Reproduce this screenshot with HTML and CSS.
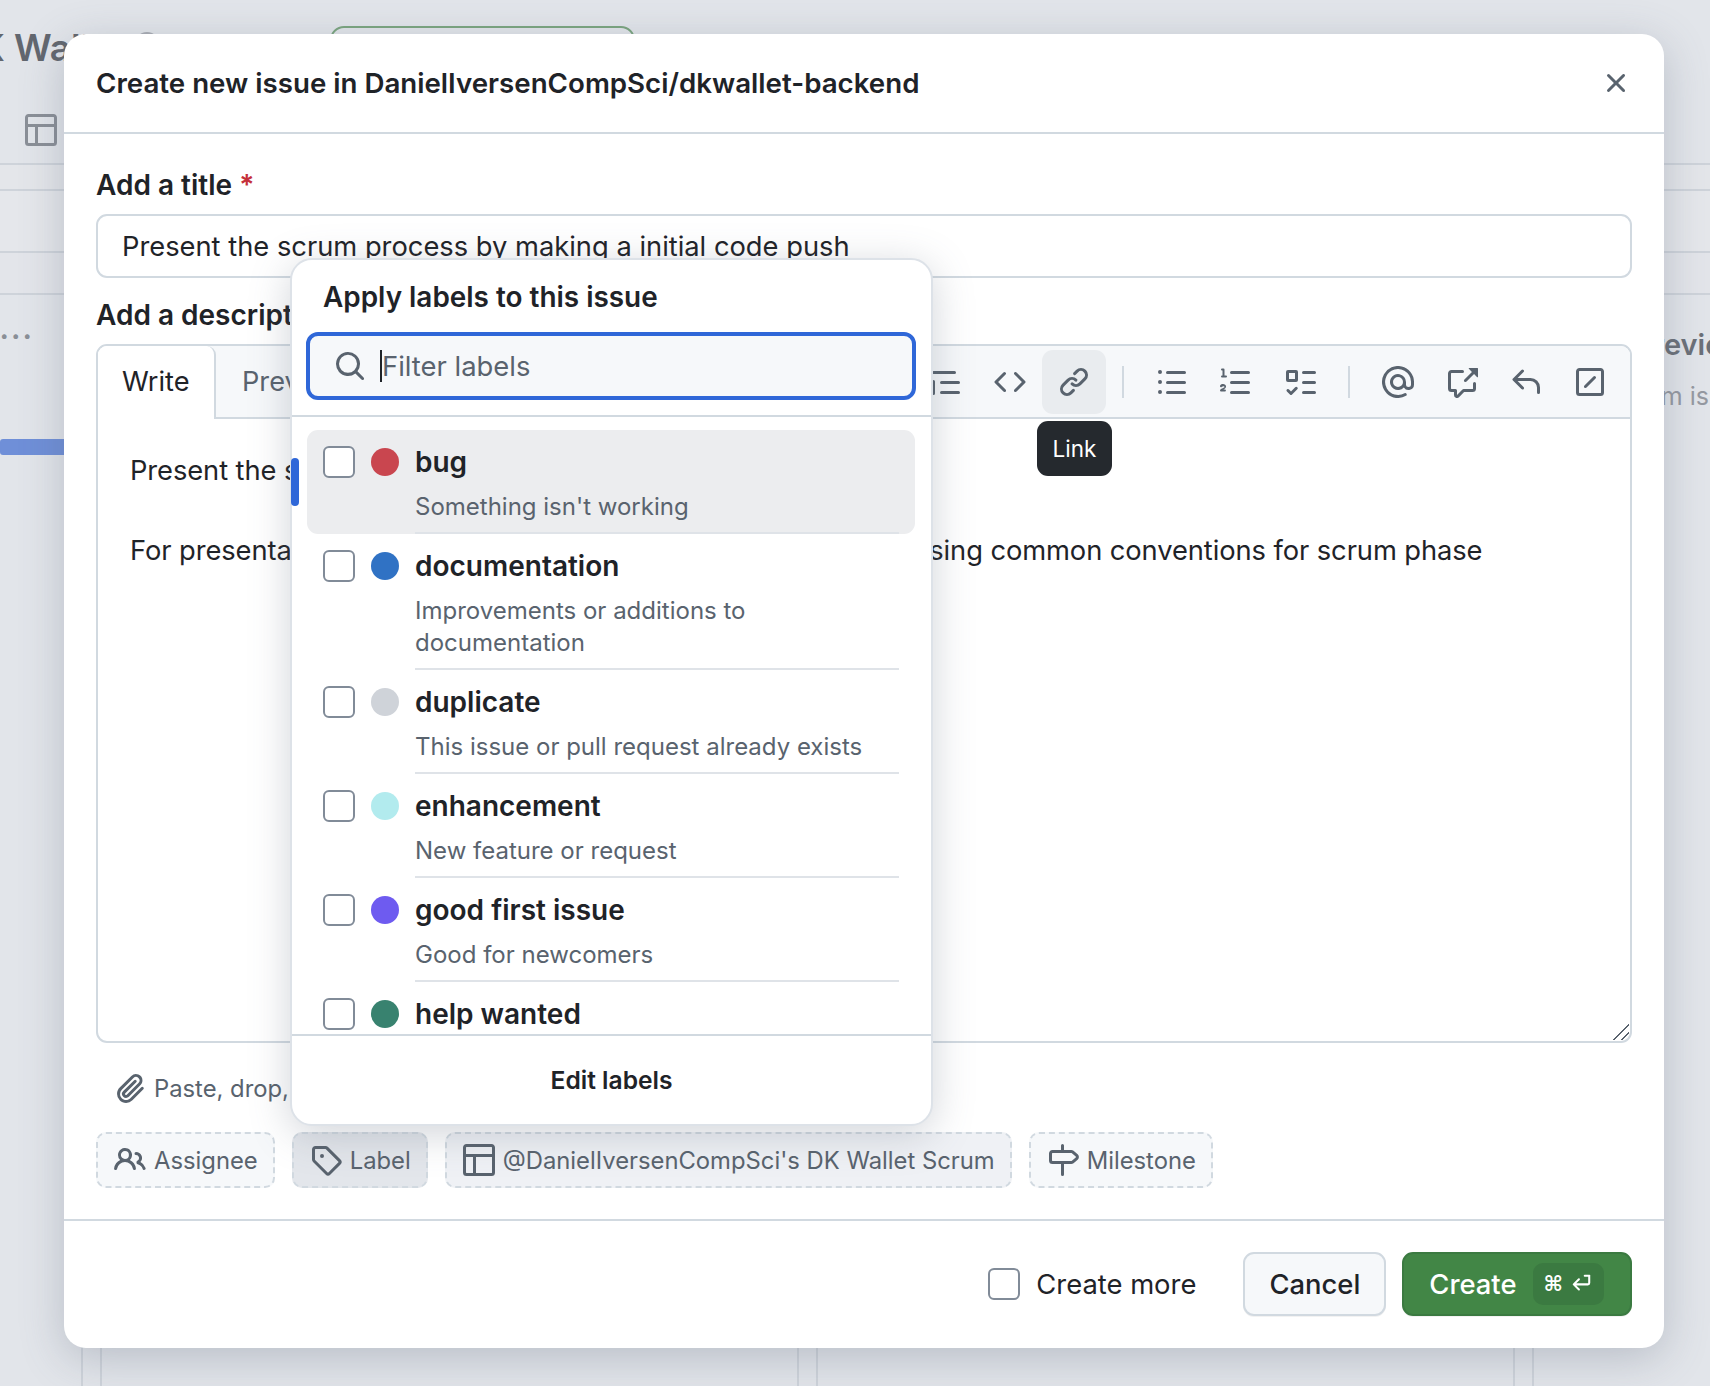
FILE: index.html
```html
<!DOCTYPE html>
<html lang="en">
<head>
  <meta charset="UTF-8" />
  <title>Create new issue</title>
  <link rel="stylesheet" href="styles.css">
</head>
<body>
  <svg class="sprite" xmlns="http://www.w3.org/2000/svg">
    <symbol id="i-x" viewBox="0 0 16 16"><path d="M3.72 3.72a.75.75 0 0 1 1.06 0L8 6.94l3.22-3.22a.749.749 0 0 1 1.275.326.749.749 0 0 1-.215.734L9.06 8l3.22 3.22a.749.749 0 0 1-.326 1.275.749.749 0 0 1-.734-.215L8 9.06l-3.22 3.22a.751.751 0 0 1-1.042-.018.751.751 0 0 1-.018-1.042L6.94 8 3.72 4.78a.75.75 0 0 1 0-1.06Z"/></symbol>
    <symbol id="i-search" viewBox="0 0 16 16"><path d="M10.68 11.74a6 6 0 0 1-7.922-8.982 6 6 0 0 1 8.982 7.922l3.04 3.04a.749.749 0 0 1-.326 1.275.749.749 0 0 1-.734-.215ZM11.5 7a4.499 4.499 0 1 0-8.997 0A4.499 4.499 0 0 0 11.5 7Z"/></symbol>
    <symbol id="i-quote" viewBox="0 0 16 16"><path d="M1.75 2.5h10.5a.75.75 0 0 1 0 1.5H1.75a.75.75 0 0 1 0-1.5Zm4 5h8.5a.75.75 0 0 1 0 1.5h-8.5a.75.75 0 0 1 0-1.5Zm0 5h8.5a.75.75 0 0 1 0 1.5h-8.5a.75.75 0 0 1 0-1.5ZM2.5 7.75v6a.75.75 0 0 1-1.5 0v-6a.75.75 0 0 1 1.5 0Z"/></symbol>
    <symbol id="i-code" viewBox="0 0 16 16"><path d="m11.28 3.22 4.25 4.25a.75.75 0 0 1 0 1.06l-4.25 4.25a.749.749 0 0 1-1.275-.326.749.749 0 0 1 .215-.734L13.94 8l-3.72-3.72a.749.749 0 0 1 .326-1.275.749.749 0 0 1 .734.215Zm-6.56 0a.751.751 0 0 1 1.042.018.751.751 0 0 1 .018 1.042L2.06 8l3.72 3.72a.749.749 0 0 1-.326 1.275.749.749 0 0 1-.734-.215L.47 8.53a.75.75 0 0 1 0-1.06Z"/></symbol>
    <symbol id="i-link" viewBox="0 0 16 16"><path d="m7.775 3.275 1.25-1.25a3.5 3.5 0 1 1 4.95 4.95l-2.5 2.5a3.5 3.5 0 0 1-4.95 0 .751.751 0 0 1 .018-1.042.751.751 0 0 1 1.042-.018 1.998 1.998 0 0 0 2.83 0l2.5-2.5a2.002 2.002 0 0 0-2.83-2.83l-1.25 1.25a.751.751 0 0 1-1.042-.018.751.751 0 0 1-.018-1.042Zm-4.69 9.64a1.998 1.998 0 0 0 2.83 0l1.25-1.25a.751.751 0 0 1 1.042.018.751.751 0 0 1 .018 1.042l-1.25 1.25a3.5 3.5 0 1 1-4.95-4.95l2.5-2.5a3.5 3.5 0 0 1 4.95 0 .751.751 0 0 1-.018 1.042.751.751 0 0 1-1.042.018 1.998 1.998 0 0 0-2.83 0l-2.5 2.5a1.998 1.998 0 0 0 0 2.83Z"/></symbol>
    <symbol id="i-ul" viewBox="0 0 16 16"><path d="M5.75 2.5h8.5a.75.75 0 0 1 0 1.5h-8.5a.75.75 0 0 1 0-1.5Zm0 5h8.5a.75.75 0 0 1 0 1.5h-8.5a.75.75 0 0 1 0-1.5Zm0 5h8.5a.75.75 0 0 1 0 1.5h-8.5a.75.75 0 0 1 0-1.5ZM2 14a1 1 0 1 1 0-2 1 1 0 0 1 0 2Zm1-6a1 1 0 1 1-2 0 1 1 0 0 1 2 0ZM2 4a1 1 0 1 1 0-2 1 1 0 0 1 0 2Z"/></symbol>
    <symbol id="i-ol" viewBox="0 0 16 16"><path d="M5 3.25a.75.75 0 0 1 .75-.75h8.5a.75.75 0 0 1 0 1.5h-8.5A.75.75 0 0 1 5 3.25Zm0 5a.75.75 0 0 1 .75-.75h8.5a.75.75 0 0 1 0 1.5h-8.5A.75.75 0 0 1 5 8.25Zm0 5a.75.75 0 0 1 .75-.75h8.5a.75.75 0 0 1 0 1.5h-8.5a.75.75 0 0 1-.75-.75ZM.924 10.32a.5.5 0 0 1-.851-.525c.34-.551.962-.772 1.526-.747.547.024 1.141.299 1.35.847.125.33.063.677-.111.958-.18.29-.446.5-.72.668-.15.091-.302.168-.44.23h.78a.5.5 0 0 1 0 1H.5a.5.5 0 0 1-.5-.5c0-.318.201-.533.373-.65.2-.135.468-.237.691-.327l.066-.027c.247-.1.48-.208.67-.325.207-.126.328-.247.39-.347.054-.087.055-.139.04-.178-.06-.16-.238-.252-.46-.262-.221-.01-.448.074-.566.22ZM2.25 1.75a.5.5 0 0 0-.5-.5H1a.5.5 0 0 0 0 1h.25v2.5H1a.5.5 0 0 0 0 1h2a.5.5 0 0 0 0-1h-.75Z"/></symbol>
    <symbol id="i-task" viewBox="0 0 16 16"><path fill-rule="evenodd" d="M2 2h4a1 1 0 0 1 1 1v4a1 1 0 0 1-1 1H2a1 1 0 0 1-1-1V3a1 1 0 0 1 1-1Zm.5 1.5v3h3v-3ZM6.655 10.595a.75.75 0 0 1 0 1.06L4.03 14.28a.75.75 0 0 1-1.06 0l-1.5-1.5a.749.749 0 0 1 .326-1.275.749.749 0 0 1 .734.215l.97.97 2.095-2.095a.75.75 0 0 1 1.06 0ZM9.75 2.5h5.5a.75.75 0 0 1 0 1.5h-5.5a.75.75 0 0 1 0-1.5Zm0 5h5.5a.75.75 0 0 1 0 1.5h-5.5a.75.75 0 0 1 0-1.5Zm0 5h5.5a.75.75 0 0 1 0 1.5h-5.5a.75.75 0 0 1 0-1.5Z"/></symbol>
    <symbol id="i-mention" viewBox="0 0 16 16"><path d="M4.75 2.37a6.501 6.501 0 0 0 6.5 11.26.75.75 0 0 1 .75 1.298A7.999 7.999 0 0 1 .989 4.148 8 8 0 0 1 16 7.75v1.5a2.75 2.75 0 0 1-5.072 1.475 3.999 3.999 0 0 1-6.65-4.19A4 4 0 0 1 12 8v1.25a1.25 1.25 0 0 0 2.5 0V7.867a6.5 6.5 0 0 0-9.75-5.496ZM10.5 8a2.5 2.5 0 1 0-5 0 2.5 2.5 0 0 0 5 0Z"/></symbol>
    <symbol id="i-xref" viewBox="0 0 16 16"><path d="M2.75 3.5a.25.25 0 0 0-.25.25v7.5c0 .138.112.25.25.25h2a.75.75 0 0 1 .75.75v2.19l2.72-2.72a.749.749 0 0 1 .53-.22h4.5a.25.25 0 0 0 .25-.25v-2.5a.75.75 0 0 1 1.5 0v2.5A1.75 1.75 0 0 1 13.25 13H9.06l-2.573 2.573A1.458 1.458 0 0 1 4 14.543V13H2.75A1.75 1.75 0 0 1 1 11.25v-7.5C1 2.784 1.784 2 2.75 2h5.5a.75.75 0 0 1 0 1.5ZM16 1.25v4.146a.25.25 0 0 1-.427.177L14.03 4.03l-3.75 3.75a.749.749 0 0 1-1.275-.326.749.749 0 0 1 .215-.734l3.75-3.75-1.543-1.543A.25.25 0 0 1 11.604 1h4.146a.25.25 0 0 1 .25.25Z"/></symbol>
    <symbol id="i-reply" viewBox="0 0 16 16"><path d="M6.78 1.97a.75.75 0 0 1 0 1.06L3.81 6h6.44A4.75 4.75 0 0 1 15 10.75v2.5a.75.75 0 0 1-1.5 0v-2.5a3.25 3.25 0 0 0-3.25-3.25H3.81l2.97 2.97a.749.749 0 0 1-.326 1.275.749.749 0 0 1-.734-.215L1.47 7.28a.75.75 0 0 1 0-1.06l4.25-4.25a.75.75 0 0 1 1.06 0Z"/></symbol>
    <symbol id="i-slash" viewBox="0 0 16 16"><path fill-rule="evenodd" d="M1 2.75C1 1.784 1.784 1 2.75 1h10.5c.966 0 1.75.784 1.75 1.75v10.5A1.75 1.75 0 0 1 13.25 15H2.75A1.75 1.75 0 0 1 1 13.25Zm1.75-.25a.25.25 0 0 0-.25.25v10.5c0 .138.112.25.25.25h10.5a.25.25 0 0 0 .25-.25V2.75a.25.25 0 0 0-.25-.25ZM10.78 5.22a.75.75 0 0 1 0 1.06l-4.5 4.5a.749.749 0 0 1-1.275-.326.749.749 0 0 1 .215-.734l4.5-4.5a.75.75 0 0 1 1.06 0Z"/></symbol>
    <symbol id="i-clip" viewBox="0 0 16 16"><path d="M12.212 3.02a1.753 1.753 0 0 0-2.478.003l-5.83 5.83a3.007 3.007 0 0 0-.88 2.127c0 .795.315 1.551.88 2.116.567.567 1.333.89 2.126.89.79 0 1.548-.321 2.116-.89l5.48-5.48a.75.75 0 0 1 1.06 1.06l-5.48 5.48a4.492 4.492 0 0 1-3.177 1.33c-1.2 0-2.345-.487-3.187-1.33a4.483 4.483 0 0 1-1.32-3.177c0-1.195.475-2.341 1.32-3.186l5.83-5.83a3.25 3.25 0 0 1 5.553 2.297c0 .863-.343 1.691-.953 2.301L7.439 12.39c-.375.377-.884.59-1.416.593a1.998 1.998 0 0 1-1.412-.593 1.992 1.992 0 0 1 0-2.828l5.48-5.48a.751.751 0 0 1 1.042.018.751.751 0 0 1 .018 1.042l-5.48 5.48a.492.492 0 0 0 0 .707.499.499 0 0 0 .352.154.51.51 0 0 0 .356-.154l5.833-5.827a1.755 1.755 0 0 0 0-2.481Z"/></symbol>
    <symbol id="i-people" viewBox="0 0 16 16"><path d="M2 5.5a3.5 3.5 0 1 1 5.898 2.549 5.508 5.508 0 0 1 3.034 4.084.75.75 0 1 1-1.482.235 4 4 0 0 0-7.9 0 .75.75 0 0 1-1.482-.236A5.507 5.507 0 0 1 3.102 8.05 3.493 3.493 0 0 1 2 5.5ZM11 4a3.001 3.001 0 0 1 2.22 5.018 5.01 5.01 0 0 1 2.56 3.012.749.749 0 0 1-.885.954.752.752 0 0 1-.549-.514 3.507 3.507 0 0 0-2.522-2.372.75.75 0 0 1-.574-.73v-.352a.75.75 0 0 1 .416-.672A1.5 1.5 0 0 0 11 5.5.75.75 0 0 1 11 4Zm-5.5-.5a2 2 0 1 0-.001 3.999A2 2 0 0 0 5.5 3.5Z"/></symbol>
    <symbol id="i-tag" viewBox="0 0 16 16"><path d="M1 7.775V2.75C1 1.784 1.784 1 2.75 1h5.025c.464 0 .91.184 1.238.513l6.25 6.25a1.75 1.75 0 0 1 0 2.474l-5.026 5.026a1.75 1.75 0 0 1-2.474 0l-6.25-6.25A1.752 1.752 0 0 1 1 7.775Zm1.5 0c0 .066.026.13.073.177l6.25 6.25a.25.25 0 0 0 .354 0l5.025-5.025a.25.25 0 0 0 0-.354l-6.25-6.25a.25.25 0 0 0-.177-.073H2.75a.25.25 0 0 0-.25.25ZM6 5a1 1 0 1 1 0 2 1 1 0 0 1 0-2Z"/></symbol>
    <symbol id="i-table" viewBox="0 0 16 16"><path d="M0 1.75C0 .784.784 0 1.75 0h12.5C15.216 0 16 .784 16 1.75v12.5A1.75 1.75 0 0 1 14.25 16H1.75A1.75 1.75 0 0 1 0 14.25ZM6.5 6.5v8h7.75a.25.25 0 0 0 .25-.25V6.5Zm8-1.5V1.75a.25.25 0 0 0-.25-.25H1.75a.25.25 0 0 0-.25.25V5Zm-13 1.5v7.75c0 .138.112.25.25.25H5v-8Z"/></symbol>
    <symbol id="i-milestone" viewBox="0 0 16 16"><path d="M7.75 0a.75.75 0 0 1 .75.75V3h3.634c.414 0 .814.147 1.13.414l2.07 1.75a1.75 1.75 0 0 1 0 2.672l-2.07 1.75a1.75 1.75 0 0 1-1.13.414H8.5v5.25a.75.75 0 0 1-1.5 0V10H2.75A1.75 1.75 0 0 1 1 8.25v-3.5C1 3.784 1.784 3 2.75 3H7V.75A.75.75 0 0 1 7.75 0Zm4.384 8.5a.25.25 0 0 0 .161-.06l2.07-1.75a.248.248 0 0 0 0-.38l-2.07-1.75a.25.25 0 0 0-.161-.06H2.75a.25.25 0 0 0-.25.25v3.5c0 .138.112.25.25.25h9.384Z"/></symbol>
    <symbol id="i-return" viewBox="0 0 16 16"><path d="M14 2.75v4.5A1.75 1.75 0 0 1 12.25 9H3.8l2.5 2.5a.75.75 0 0 1-1.06 1.06L1.47 8.8a.75.75 0 0 1 0-1.06l3.77-3.77A.75.75 0 0 1 6.3 5.03L3.83 7.5h8.42a.25.25 0 0 0 .25-.25v-4.5H10a.75.75 0 0 1 0-1.5h3.25a.75.75 0 0 1 .75 1Z"/></symbol>
  </svg>

  <!-- project board behind the dialog -->
  <div class="page">
    <div class="page-head">
      <div class="board-title">
        <h1>DK Wallet</h1>
        <span class="private-dot"></span>
        <span class="status-btn"></span>
      </div>
      <svg class="icon view-icon"><use href="#i-table"/></svg>
    </div>
    <div class="band band-a"></div>
    <div class="band band-b"></div>
    <div class="band band-c"></div>
    <div class="board">
      <div class="col col-first">
        <div class="col-dots">•••</div>
        <div class="col-bar"></div>
      </div>
      <div class="col col-mid"></div>
      <div class="col col-mid"></div>
      <div class="col col-last">
        <h2>In review</h2>
        <p>This item is</p>
      </div>
    </div>
  </div>

  <div class="overlay">
    <div class="modal">
      <div class="modal-head">
        <h2>Create new issue in DanielIversenCompSci/dkwallet-backend</h2>
        <svg class="icon"><use href="#i-x"/></svg>
      </div>

      <div class="modal-body">
        <div class="field-label">Add a title <span class="req">*</span></div>
        <div class="title-input">Present the scrum process by making a initial code push</div>

        <div class="field-label desc-label">Add a description</div>
        <div class="editor">
          <div class="editor-bar">
            <div class="tabs">
              <div class="tab active">Write</div>
              <div class="tab tab-preview">Preview</div>
            </div>
            <div class="tools">
              <span class="tool"><svg class="icon"><use href="#i-quote"/></svg></span>
              <span class="tool"><svg class="icon"><use href="#i-code"/></svg></span>
              <span class="tool hovered"><svg class="icon"><use href="#i-link"/></svg></span>
              <span class="tool-sep"></span>
              <span class="tool"><svg class="icon"><use href="#i-ul"/></svg></span>
              <span class="tool"><svg class="icon"><use href="#i-ol"/></svg></span>
              <span class="tool"><svg class="icon"><use href="#i-task"/></svg></span>
              <span class="tool-sep"></span>
              <span class="tool"><svg class="icon"><use href="#i-mention"/></svg></span>
              <span class="tool"><svg class="icon"><use href="#i-xref"/></svg></span>
              <span class="tool"><svg class="icon"><use href="#i-reply"/></svg></span>
              <span class="tool"><svg class="icon"><use href="#i-slash"/></svg></span>
            </div>
          </div>
          <div class="editor-text">
            <p>Present the scrum process by making a initial code push</p>
            <p>For presentation purposes we keep the first push very small, using common conventions for scrum phase</p>
            <span class="resize-grip"></span>
          </div>
        </div>

        <div class="attach"><svg class="icon"><use href="#i-clip"/></svg>Paste, drop, or click to add files</div>

        <div class="chips">
          <span class="chip"><svg class="icon"><use href="#i-people"/></svg>Assignee</span>
          <span class="chip chip-open"><svg class="icon"><use href="#i-tag"/></svg>Label</span>
          <span class="chip chip-set"><svg class="icon"><use href="#i-table"/></svg>@DanielIversenCompSci's DK Wallet Scrum</span>
          <span class="chip"><svg class="icon"><use href="#i-milestone"/></svg>Milestone</span>
        </div>
      </div>

      <div class="modal-foot">
        <label class="more"><span class="checkbox"></span>Create more</label>
        <button class="btn">Cancel</button>
        <button class="btn btn-green">Create
          <span class="keys"><span class="cmd">⌘</span><svg class="icon"><use href="#i-return"/></svg></span>
        </button>
      </div>

      <div class="tooltip">Link</div>

      <div class="popover">
        <div class="pop-title">Apply labels to this issue</div>
        <div class="pop-search">
          <svg class="icon"><use href="#i-search"/></svg>
          <span class="caret"></span>
          <span>Filter labels</span>
        </div>
        <div class="pop-list">
          <div class="item hover">
            <span class="checkbox"></span>
            <span class="dot dot-bug"></span>
            <div class="item-text"><b>bug</b><span>Something isn't working</span></div>
          </div>
          <div class="item">
            <span class="checkbox"></span>
            <span class="dot dot-doc"></span>
            <div class="item-text"><b>documentation</b><span>Improvements or additions to documentation</span></div>
          </div>
          <div class="item">
            <span class="checkbox"></span>
            <span class="dot dot-dup"></span>
            <div class="item-text"><b>duplicate</b><span>This issue or pull request already exists</span></div>
          </div>
          <div class="item">
            <span class="checkbox"></span>
            <span class="dot dot-enh"></span>
            <div class="item-text"><b>enhancement</b><span>New feature or request</span></div>
          </div>
          <div class="item">
            <span class="checkbox"></span>
            <span class="dot dot-first"></span>
            <div class="item-text"><b>good first issue</b><span>Good for newcomers</span></div>
          </div>
          <div class="item">
            <span class="checkbox"></span>
            <span class="dot dot-help"></span>
            <div class="item-text"><b>help wanted</b><span>Extra attention is needed</span></div>
          </div>
        </div>
        <div class="pop-foot">Edit labels</div>
        <span class="active-mark"></span>
      </div>
    </div>
  </div>
</body>
</html>
```

FILE: styles.css
```css
* { box-sizing: border-box; }
html, body {
  margin: 0;
  height: 1386px;
  overflow: hidden;
}
body {
  position: relative;
  font-family: Inter, "Noto Sans", sans-serif;
  color: #1f2328;
  background: #e2e5ea;
}
.sprite { display: none; }
.icon {
  width: 32px;
  height: 32px;
  fill: #59636e;
  flex: none;
}
h1, h2, p { margin: 0; }

/* page behind the dialog */
.page {
  height: 1386px;
  display: flex;
  flex-direction: column;
  overflow: hidden;
}
.page-head {
  height: 163px;
  padding-left: 25px;
}
.board-title {
  display: flex;
  height: 87px;
  margin-left: -25px;
  padding-top: 26px;
}
.board-title h1 {
  font-size: 37px;
  font-weight: 600;
  line-height: 44px;
  color: #62676f;
  margin-left: -48px;
  width: 168px;
  white-space: nowrap;
}
.private-dot {
  width: 26px;
  height: 26px;
  border-radius: 50%;
  background: #a9adb4;
  margin-left: 14px;
  margin-top: 6px;
}
.status-btn {
  width: 305px;
  height: 50px;
  margin-left: 170px;
  border: 2px solid #7ba57f;
  border-radius: 14px;
}
.view-icon {
  display: block;
  fill: #8a8f97;
  margin-top: 27px;
}
.band {
  border-top: 2px solid #ced3da;
}
.band-a { height: 26px; background: #e4e6ea; }
.band-b { height: 62px; background: #e5e7eb; }
.band-c { height: 42px; background: #e3e5ea; }
.board {
  flex: 1;
  display: flex;
  gap: 17px;
  border-top: 2px solid #ced3da;
}
.col { flex: none; }
.col-first {
  width: 83px;
  border-right: 2px solid #ced3da;
}
.col-dots {
  font-size: 15px;
  line-height: 20px;
  letter-spacing: 3px;
  color: #8a8f97;
  margin-top: 31px;
}
.col-bar {
  height: 16px;
  background: #6f8fd8;
  border-radius: 3px;
  margin-top: 93px;
}
.col-mid {
  width: 699px;
  border-left: 2px solid #ced3da;
  border-right: 2px solid #ced3da;
}
.col-last {
  flex: 1;
  border-left: 2px solid #ced3da;
  padding: 32px 0 0 86px;
  white-space: nowrap;
}
.col-last h2 {
  font-size: 29px;
  font-weight: 600;
  line-height: 36px;
  color: #6b7078;
}
.col-last p {
  font-size: 25px;
  line-height: 34px;
  margin: 16px 0 0 -45px;
  color: #9599a1;
}

/* dialog */
.overlay {
  position: absolute;
  inset: 0;
  padding: 34px 46px 38px 64px;
}
.modal {
  position: relative;
  height: 100%;
  background: #fff;
  border-radius: 22px;
  box-shadow: 0 10px 44px rgba(90, 100, 120, 0.3);
  display: flex;
  flex-direction: column;
}
.modal-head {
  height: 100px;
  flex: none;
  padding: 0 32px;
  display: flex;
  justify-content: space-between;
  align-items: center;
  border-bottom: 2px solid #d1d9e0;
}
.modal-head h2 {
  font-size: 27.7px;
  font-weight: 600;
}
.modal-body {
  flex: 1;
  padding: 35px 32px 0;
}
.field-label {
  font-size: 28px;
  font-weight: 600;
  line-height: 32px;
}
.req { color: #c5303a; }
.desc-label { margin-top: 21px; }
.title-input {
  height: 64px;
  margin-top: 13px;
  border: 2px solid #d1d9e0;
  border-radius: 11px;
  padding: 0 24px;
  font-size: 27.3px;
  line-height: 61px;
}
.editor {
  height: 699px;
  margin-top: 13px;
  border: 2px solid #d1d9e0;
  border-radius: 11px;
  display: flex;
  flex-direction: column;
}
.editor-bar {
  height: 73px;
  flex: none;
  background: #f6f8fa;
  border-bottom: 2px solid #d1d9e0;
  border-radius: 9px 9px 0 0;
  display: flex;
  justify-content: space-between;
}
.tabs { display: flex; }
.tab {
  padding: 0 24px;
  font-size: 27.2px;
  line-height: 71px;
  color: #59636e;
}
.tab-preview { margin-left: 2px; }
.tab.active {
  width: 118px;
  height: 73px;
  color: #1f2328;
  background: #fff;
  border-right: 2px solid #d1d9e0;
  border-radius: 9px 9px 0 0;
}
.tools {
  display: flex;
  align-items: center;
  padding-right: 8px;
}
.tool {
  width: 64px;
  height: 64px;
  display: flex;
  align-items: center;
  justify-content: center;
  border-radius: 11px;
}
.tool.hovered { background: #e9ecef; }
.tool-sep {
  width: 48px;
  height: 32px;
  background: linear-gradient(#d1d9e0, #d1d9e0) center / 2px 100% no-repeat;
  margin: 0 -7px;
}
.editor-text {
  flex: 1;
  position: relative;
  padding: 32px 32px 0;
  font-size: 27.3px;
  line-height: 40px;
  letter-spacing: -0.08px;
}
.editor-text p { margin-bottom: 40px; white-space: nowrap; }
.resize-grip {
  position: absolute;
  right: 1px;
  bottom: 1px;
  width: 16px;
  height: 16px;
  background: linear-gradient(135deg, transparent 49%, #59636e 49%, #59636e 56%, transparent 56%, transparent 72%, #59636e 72%, #59636e 79%, transparent 79%);
}
.attach {
  display: flex;
  align-items: center;
  gap: 8px;
  height: 32px;
  margin-top: 29px;
  padding-left: 18px;
  font-size: 23.8px;
  color: #59636e;
  white-space: nowrap;
}
.chips {
  display: flex;
  gap: 17px;
  margin-top: 28px;
}
.chip {
  height: 56px;
  display: flex;
  align-items: center;
  gap: 8px;
  padding: 0 15px 0 16px;
  border: 2px dashed #d1d9e0;
  border-radius: 10px;
  background: #f6f8fa;
  font-size: 23.8px;
  color: #59636e;
  white-space: nowrap;
}
.chip-open { background: #e3e6eb; }
.chip-set { background: #eff1f5; }
.modal-foot {
  height: 129px;
  flex: none;
  padding: 0 32px 2px;
  border-top: 2px solid #d1d9e0;
  display: flex;
  align-items: center;
  justify-content: flex-end;
}
.checkbox {
  width: 32px;
  height: 32px;
  flex: none;
  background: #fff;
  border: 2px solid #818b98;
  border-radius: 6px;
}
.more {
  display: flex;
  align-items: center;
  gap: 16px;
  font-size: 27.4px;
  margin-right: 47px;
}
.btn {
  height: 64px;
  padding: 0 24px;
  font: 500 27.4px Inter, sans-serif;
  color: #1f2328;
  background: #f6f8fa;
  border: 2px solid #d1d9e0;
  border-radius: 11px;
  box-shadow: 0 1px 0 rgba(31, 35, 40, 0.06);
  display: flex;
  align-items: center;
}
.btn-green {
  margin-left: 16px;
  padding: 0 26px 0 25px;
  color: #fff;
  background: #428646;
  border-color: #3b7a41;
  gap: 16px;
}
.keys {
  height: 42px;
  padding: 0 11px;
  background: #3b7a41;
  border-radius: 10px;
  display: flex;
  align-items: center;
  gap: 8px;
}
.cmd {
  font-family: "DejaVu Sans", sans-serif;
  font-size: 21px;
  font-weight: 700;
}
.keys .icon {
  width: 22px;
  height: 22px;
  fill: #fff;
}

.tooltip {
  position: absolute;
  left: 973px;
  top: 387px;
  width: 75px;
  height: 55px;
  border-radius: 11px;
  background: #25292e;
  color: #fff;
  font-size: 22.5px;
  line-height: 55px;
  text-align: center;
}

/* label picker */
.popover {
  position: absolute;
  left: 226px;
  top: 224px;
  width: 643px;
  height: 868px;
  background: #fff;
  border: 2px solid #dde2e8;
  border-radius: 22px;
  box-shadow: 0 8px 40px rgba(90, 100, 120, 0.28);
  display: flex;
  flex-direction: column;
}
.pop-title {
  height: 72px;
  flex: none;
  padding: 20px 31px 0;
  font-size: 27.9px;
  font-weight: 600;
  line-height: 34px;
}
.pop-search {
  height: 68px;
  flex: none;
  margin: 0 15px 0 14px;
  padding: 0 24px;
  display: flex;
  align-items: center;
  gap: 14px;
  background: #f6f8fa;
  border: 4px solid #2f67d8;
  border-radius: 12px;
  font-size: 27.4px;
  color: #59636e;
}
.caret {
  width: 2px;
  height: 32px;
  background: #1f2328;
  margin-right: -14px;
}
.pop-list {
  flex: 1;
  overflow: hidden;
  margin-top: 15px;
  padding: 13px 16px 0 15px;
  border-top: 2px solid #d1d9e0;
  border-bottom: 2px solid #d1d9e0;
}
.active-mark {
  position: absolute;
  left: -1px;
  top: 198px;
  width: 8px;
  height: 48px;
  border-radius: 4px;
  background: #2f67d8;
}
.item {
  display: flex;
  padding-left: 16px;
  padding-top: 16px;
  border-radius: 11px;
}
.item.hover { background: #ecedef; }
.dot {
  width: 28px;
  height: 28px;
  flex: none;
  margin: 2px 16px 0 16px;
  border-radius: 50%;
}
.dot-bug { background: #c9464f; }
.dot-doc { background: #3072c4; }
.dot-dup { background: #cfd3d9; }
.dot-enh { background: #b2ebee; }
.dot-first { background: #6e5bf0; }
.dot-help { background: #38826f; }
.item-text {
  flex: 1;
  margin-right: 16px;
  padding-bottom: 9px;
  border-bottom: 2px solid #dfe3e8;
  display: flex;
  flex-direction: column;
}
.item-text b {
  font-size: 28px;
  font-weight: 600;
  line-height: 32px;
  margin-bottom: 13px;
}
.item-text span {
  font-size: 24px;
  line-height: 32px;
  color: #59636e;
}
.pop-foot {
  height: 88px;
  flex: none;
  font-size: 24.6px;
  font-weight: 600;
  line-height: 88px;
  text-align: center;
}
```
